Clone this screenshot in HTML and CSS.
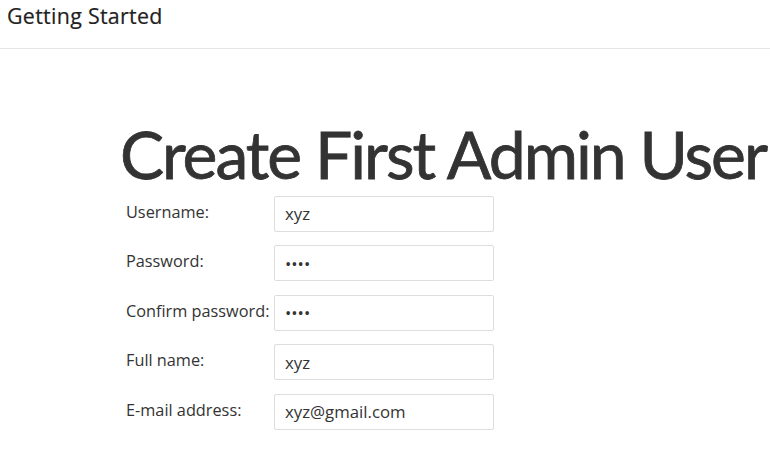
FILE: index.html
```html
<!DOCTYPE html>
<html>
<head>
<meta charset="utf-8">
<link rel="stylesheet" href="styles.css">
</head>
<body>
<header class="topbar">Getting Started</header>
<main class="content">
  <h1 class="title">Create First Admin User</h1>
  <form class="form">
    <label class="label" for="u">Username:</label>
    <input class="field" id="u" type="text" value="xyz">
    <label class="label" for="p">Password:</label>
    <input class="field" id="p" type="password" value="abcd">
    <label class="label" for="c">Confirm password:</label>
    <input class="field" id="c" type="password" value="abcd">
    <label class="label" for="f">Full name:</label>
    <input class="field" id="f" type="text" value="xyz">
    <label class="label" for="e">E-mail address:</label>
    <input class="field" id="e" type="text" value="xyz@gmail.com">
  </form>
</main>
</body>
</html>
```
FILE: styles.css
```css
html, body {
  margin: 0;
  padding: 0;
  background: #fff;
  color: #333;
  font-family: "Open Sans", "Noto Sans", sans-serif;
}
.topbar {
  padding: 2px 7px 18px;
  font-size: 21.4px;
  line-height: 28px;
  letter-spacing: 0.3px;
  color: #222;
  border-bottom: 1px solid #e5e5e5;
  -webkit-text-stroke: 0.2px #222;
}
.content {
  padding-left: 120px;
  padding-top: 65px;
}
.title {
  margin: 0;
  font-family: "Lato", "Open Sans", sans-serif;
  font-size: 66px;
  line-height: 80px;
  font-weight: 400;
  letter-spacing: -2px;
  word-spacing: 0;
  color: #333;
  white-space: nowrap;
  padding-bottom: 1.5px;
  -webkit-text-stroke: 0.8px #333;
}
.form {
  display: grid;
  grid-template-columns: 154px 220px;
  row-gap: 13.5px;
}
.label {
  padding: 5px 0 0 6px;
  font-size: 16.3px;
  line-height: 22px;
  color: #333;
}
.field {
  box-sizing: border-box;
  height: 36px;
  width: 220px;
  margin: 0;
  padding: 0 10px;
  border: 1px solid #ddd;
  border-radius: 2px;
  font-family: "Open Sans", "Noto Sans", sans-serif;
  font-size: 16.8px;
  color: #333;
  background: #fff;
  outline: none;
}
```
